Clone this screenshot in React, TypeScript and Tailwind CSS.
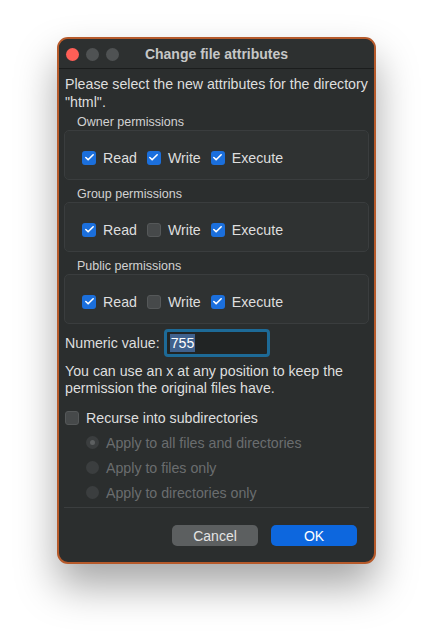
import { Check } from "lucide-react";

type Perm = { label: string; read: boolean; write: boolean; execute: boolean };

const perms: Perm[] = [
  { label: "Owner permissions", read: true, write: true, execute: true },
  { label: "Group permissions", read: true, write: false, execute: true },
  { label: "Public permissions", read: true, write: false, execute: true },
];

function Box({ checked }: { checked: boolean }) {
  return checked ? (
    <span className="flex h-[14px] w-[14px] items-center justify-center rounded-[3px] bg-[#1b6fdc]">
      <Check className="h-[11px] w-[11px] text-white" strokeWidth={3.5} />
    </span>
  ) : (
    <span className="h-[14px] w-[14px] rounded-[3px] border border-[#555859] bg-[#46494a]" />
  );
}

function Option({ checked, label }: { checked: boolean; label: string }) {
  return (
    <label className="flex items-center gap-[7px]">
      <Box checked={checked} />
      <span>{label}</span>
    </label>
  );
}

function Radio({ on, label }: { on?: boolean; label: string }) {
  return (
    <div className="flex h-[25px] items-center gap-[7px] pl-[22px] text-[#6a6d6e]">
      <span className="flex h-[13px] w-[13px] items-center justify-center rounded-full bg-[#3b3e3f]">
        {on && <span className="h-[5px] w-[5px] rounded-full bg-[#5d6061]" />}
      </span>
      <span>{label}</span>
    </div>
  );
}

export default function App() {
  return (
    <div className="h-[640px] w-[434px] bg-white pl-[57px] pt-[37px] font-['Liberation_Sans',Arial,sans-serif]">
      <div className="flex h-[527px] w-[319px] flex-col overflow-hidden rounded-[11px] border-2 border-[#b65a2b] bg-[#2b2e2e] text-[14.2px] leading-[18px] text-[#dedede] shadow-[0_22px_40px_rgba(0,0,0,0.35)]">
        <div className="relative flex h-[30px] shrink-0 items-center justify-center border-b border-[#1b1d1d] bg-[#2d3030]">
          <div className="absolute left-[7px] top-[9px] flex gap-[7px]">
            <span className="h-[13px] w-[13px] rounded-full bg-[#fe5f57]" />
            <span className="h-[13px] w-[13px] rounded-full bg-[#4f5253]" />
            <span className="h-[13px] w-[13px] rounded-full bg-[#4f5253]" />
          </div>
          <span className="text-[14px] font-bold text-[#c6c7c7]">Change file attributes</span>
        </div>

        <div className="flex flex-1 flex-col px-[5px] pt-[6px]">
          <p className="pl-[1px]">
            Please select the new attributes for the directory "html".
          </p>

          {perms.map((p, i) => (
            <div key={p.label} className={i === 0 ? "mt-[4px]" : "mt-[7px]"}>
              <p className="pl-[13px] text-[12.5px] leading-[15px] text-[#d2d2d2]">{p.label}</p>
              <div className="flex h-[50px] items-center gap-[10px] rounded-[5px] border border-[#3a3d3e] bg-[#2f3232] pl-[17px] pt-[5px]">
                <Option checked={p.read} label="Read" />
                <Option checked={p.write} label="Write" />
                <Option checked={p.execute} label="Execute" />
              </div>
            </div>
          ))}

          <div className="mt-[5px] flex items-center gap-[4px] pl-[1px]">
            <span>Numeric value:</span>
            <div className="flex h-[28px] w-[106px] items-center rounded-[4px] border-[3px] border-[#1d6a97] bg-[#212424] pl-[3px]">
              <span className="bg-[#40618d] px-[1px] text-white">755</span>
            </div>
          </div>

          <p className="mt-[6px] pl-[1px] leading-[17px]">
            You can use an x at any position to keep the permission the original files have.
          </p>

          <div className="mt-[12px] flex items-center gap-[7px] pl-[1px]">
            <Box checked={false} />
            <span>Recurse into subdirectories</span>
          </div>

          <div className="mt-[3px]">
            <Radio on label="Apply to all files and directories" />
            <Radio label="Apply to files only" />
            <Radio label="Apply to directories only" />
          </div>

          <div className="mt-[2px] border-t border-[#3b3e3f]" />

          <div className="mt-[17px] flex justify-end gap-[13px] pr-[12px]">
            <button className="h-[21px] w-[86px] rounded-[5px] bg-[#5c5f60] text-[14px] text-[#e4e4e4]">
              Cancel
            </button>
            <button className="h-[21px] w-[86px] rounded-[5px] bg-[#0d67de] text-[14px] text-white">
              OK
            </button>
          </div>
        </div>
      </div>
    </div>
  );
}
